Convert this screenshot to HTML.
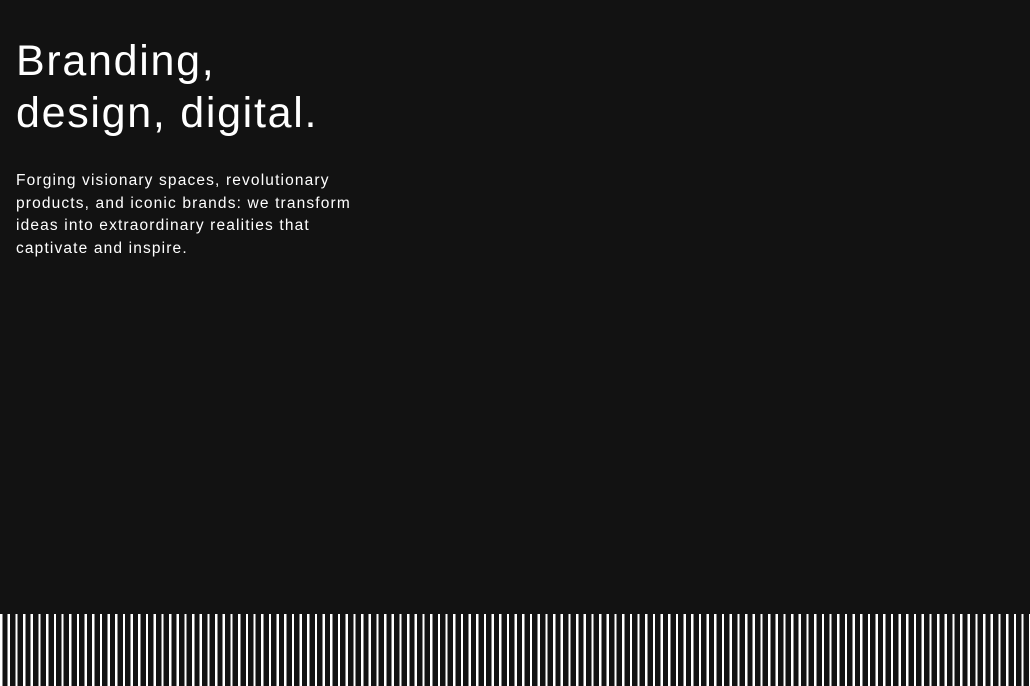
<!DOCTYPE html>
<html><head><style>
html,body{margin:0;padding:0;background:#121212;width:1030px;height:686px;overflow:hidden;font-family:"Liberation Sans",sans-serif;color:#fff}
h1{position:absolute;left:16px;top:35px;margin:0;font-weight:400;font-size:43px;line-height:52px;letter-spacing:1.7px;white-space:nowrap}
p{position:absolute;left:16px;top:170px;margin:0;font-size:15.5px;line-height:22.5px;letter-spacing:1.15px;white-space:nowrap}
.stripes{position:absolute;left:0;top:614px;width:1030px;height:72px;background:repeating-linear-gradient(90deg,#fff 0,#fff 2.3px,#121212 2.3px,#121212 7.68px)}
</style></head><body>
<h1>Branding,<br>design, digital.</h1>
<p>Forging visionary spaces, revolutionary<br>products, and iconic brands: we transform<br>ideas into extraordinary realities that<br>captivate and inspire.</p>
<div class="stripes"></div>
</body></html>
